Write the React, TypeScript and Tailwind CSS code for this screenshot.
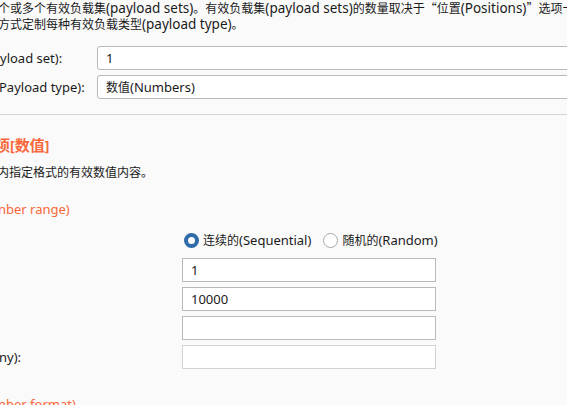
import React from "react";

// CJK glyphs render a size smaller than the latin text, like the Swing UI does
const CJK = /([\u3000-\u303f\u4e00-\u9fff\uff00-\uffef\u201c\u201d]+)/;

const Mixed = ({ text, cjk = "text-[12px]" }: { text: string; cjk?: string }) => (
  <>
    {text.split(CJK).map((part, i) =>
      i % 2 ? (
        <span key={i} className={`${cjk} font-['Noto_Sans_CJK_SC',sans-serif]`}>
          {part}
        </span>
      ) : (
        <span key={i}>{part}</span>
      )
    )}
  </>
);

const Field = ({ value, disabled }: { value?: string; disabled?: boolean }) => (
  <div
    className={`h-6 w-[254px] bg-white border flex items-center pl-2 ${
      disabled ? "border-[#d3d3d3]" : "border-[#bbb7ba]"
    }`}
  >
    {value}
  </div>
);

const Radio = ({ checked, label }: { checked?: boolean; label: string }) => (
  <label className="flex items-center gap-1">
    <span
      className={`w-[15px] h-[15px] rounded-full bg-white ${
        checked ? "border-[4px] border-[#2e6ba8]" : "border border-[#a9a9a9]"
      }`}
    />
    <span>
      <Mixed text={label} />
    </span>
  </label>
);

const RANGE = [
  { label: "", value: "1" },
  { label: "", value: "10000" },
  { label: "", value: "" },
  { label: "ny):", value: "", disabled: true },
];

export default function App() {
  return (
    <div className="w-[567px] h-[405px] overflow-hidden bg-[#fafafa] text-[13px] leading-4 text-[#1a1a1a] font-['Noto_Sans','Noto_Sans_CJK_SC',sans-serif]">
      <div className="whitespace-nowrap text-[13.5px]">
        <p className="ml-[-2px] h-4">
          <Mixed text="个或多个有效负载集(payload sets)。有效负载集(payload sets)的数量取决于“位置(Positions)”选项卡中定义的攻击类型。" />
        </p>
        <p className="ml-[-2px] h-4">
          <Mixed text="方式定制每种有效负载类型(payload type)。" />
        </p>
      </div>

      <div className="mt-[14px] flex flex-col gap-[5px]">
        <div className="flex items-center h-6">
          <div className="w-[97px] shrink-0 whitespace-nowrap">yload set):</div>
          <div className="h-6 flex-1 mr-[-20px] bg-white border border-[#bbb7ba] rounded-[3px] flex items-center pl-2">
            1
          </div>
        </div>
        <div className="flex items-center h-6">
          <div className="w-[97px] shrink-0 whitespace-nowrap">
            <span className="ml-[-1px]">Payload type):</span>
          </div>
          <div className="h-6 flex-1 mr-[-20px] bg-white border border-[#bbb7ba] rounded-[3px] flex items-center pl-2">
            <Mixed text="数值(Numbers)" />
          </div>
        </div>
      </div>

      <div className="mt-[15px] h-px bg-[#d4d4d4]" />

      <h2 className="mt-5 h-5 leading-5 text-[14px] font-bold text-[#f8683a] whitespace-nowrap">
        <span className="ml-[-5px]">
          <Mixed text="项[数值]" cjk="text-[15px]" />
        </span>
      </h2>
      <p className="mt-[9px] h-4 whitespace-nowrap">
        <span className="ml-[-3px]">
          <Mixed text="内指定格式的有效数值内容。" />
        </span>
      </p>

      <p className="mt-[21px] h-4 text-[#f8683a] whitespace-nowrap">
        <span className="ml-[-2px]">nber range)</span>
      </p>

      <div className="mt-[14px] h-[18px] pl-[184px] flex items-center gap-3">
        <Radio checked label="连续的(Sequential)" />
        <Radio label="随机的(Random)" />
      </div>

      <div className="mt-[9px] flex flex-col gap-[5px]">
        {RANGE.map((r, i) => (
          <div key={i} className="flex items-center h-6">
            <div className="w-[182px] shrink-0 whitespace-nowrap">
              <span className="ml-[-1px]">{r.label}</span>
            </div>
            <Field value={r.value} disabled={r.disabled} />
          </div>
        ))}
      </div>

      <p className="mt-[27px] h-4 text-[#f8683a] whitespace-nowrap">
        <span className="ml-[-2px]">nber format)</span>
      </p>
    </div>
  );
}
